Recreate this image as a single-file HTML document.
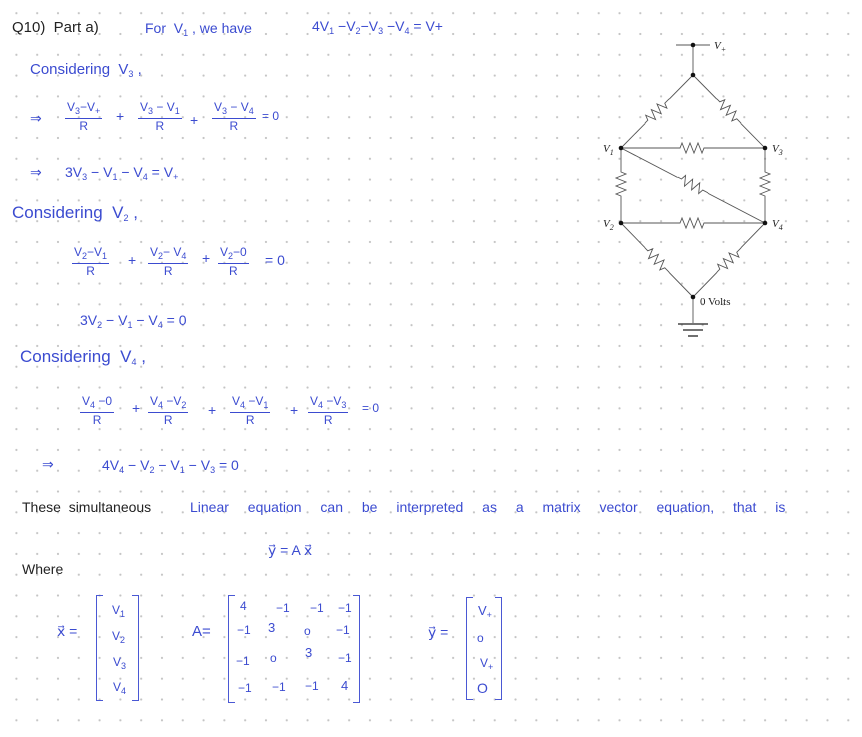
<!DOCTYPE html>
<html><head><meta charset="utf-8"><style>
html,body{margin:0;padding:0;}
body{width:862px;height:737px;position:relative;overflow:hidden;background-color:#fff;
background-image:radial-gradient(circle,#c4c4c4 0.9px,transparent 1.3px);
background-size:20.8px 20.8px;background-position:6px 2.8px;
font-family:"Liberation Sans",sans-serif;color:#3b4bd0;}
.t{position:absolute;white-space:nowrap;font-size:14px;line-height:16px;}
.k{color:#222;}
sub{font-size:9px;vertical-align:-3px;}
.f{position:absolute;text-align:center;font-size:12px;line-height:14px;}
.f .n{border-bottom:1.3px solid #3b4bd0;padding:0 2px;}
.br{position:absolute;border:1.6px solid #4a58d4;}
.bl{border-right:none;width:6px;}
.brr{border-left:none;width:6px;}
</style></head><body>
<div class="t k" style="left:12px;top:20px;font-size:15px">Q10)&nbsp; Part a)</div>
<div class="t" style="left:145px;top:20px">For&nbsp; V<sub>1</sub> , we have</div>
<div class="t" style="left:312px;top:18px">4V<sub>1</sub> −V<sub>2</sub>−V<sub>3</sub> −V<sub>4</sub> = V+</div>

<div class="t" style="left:30px;top:62px;font-size:15px">Considering&nbsp; V<sub>3</sub> ,</div>
<div class="t" style="left:30px;top:110px">⇒</div>
<div class="f" style="left:65px;top:100px"><div class="n">V<sub>3</sub>−V<sub>+</sub></div>R</div>
<div class="t" style="left:116px;top:108px">+</div>
<div class="f" style="left:138px;top:100px"><div class="n">V<sub>3</sub> − V<sub>1</sub></div>R</div>
<div class="t" style="left:190px;top:112px">+</div>
<div class="f" style="left:212px;top:100px"><div class="n">V<sub>3</sub> − V<sub>4</sub></div>R</div>
<div class="t" style="left:262px;top:108px;font-size:12px">= 0</div>

<div class="t" style="left:30px;top:164px">⇒</div>
<div class="t" style="left:65px;top:164px">3V<sub>3</sub> − V<sub>1</sub> − V<sub>4</sub> = V<sub>+</sub></div>

<div class="t" style="left:12px;top:205px;font-size:17px">Considering&nbsp; V<sub>2</sub> ,</div>
<div class="f" style="left:72px;top:245px"><div class="n">V<sub>2</sub>−V<sub>1</sub></div>R</div>
<div class="t" style="left:128px;top:252px">+</div>
<div class="f" style="left:148px;top:245px"><div class="n">V<sub>2</sub>− V<sub>4</sub></div>R</div>
<div class="t" style="left:202px;top:250px">+</div>
<div class="f" style="left:218px;top:245px"><div class="n">V<sub>2</sub>−0</div>R</div>
<div class="t" style="left:265px;top:252px">= 0</div>

<div class="t" style="left:80px;top:312px">3V<sub>2</sub> − V<sub>1</sub> − V<sub>4</sub> = 0</div>

<div class="t" style="left:20px;top:349px;font-size:17px">Considering&nbsp; V<sub>4</sub> ,</div>
<div class="f" style="left:80px;top:394px"><div class="n">V<sub>4</sub> −0</div>R</div>
<div class="t" style="left:132px;top:400px">+</div>
<div class="f" style="left:148px;top:394px"><div class="n">V<sub>4</sub> −V<sub>2</sub></div>R</div>
<div class="t" style="left:208px;top:402px">+</div>
<div class="f" style="left:230px;top:394px"><div class="n">V<sub>4</sub> −V<sub>1</sub></div>R</div>
<div class="t" style="left:290px;top:402px">+</div>
<div class="f" style="left:308px;top:394px"><div class="n">V<sub>4</sub> −V<sub>3</sub></div>R</div>
<div class="t" style="left:362px;top:400px;font-size:12px">= 0</div>

<div class="t" style="left:42px;top:456px">⇒</div>
<div class="t" style="left:102px;top:457px">4V<sub>4</sub> − V<sub>2</sub> − V<sub>1</sub> − V<sub>3</sub> = 0</div>

<div class="t k" style="left:22px;top:499px">These&nbsp; simultaneous</div>
<div class="t" style="left:190px;top:499px;word-spacing:15px">Linear equation can be interpreted as a matrix vector equation, that is</div>

<div class="t" style="left:268px;top:542px">y⃗ = A x⃗</div>
<div class="t k" style="left:22px;top:561px">Where</div>

<div class="t" style="left:57px;top:623px">x⃗ =</div>
<div class="br bl" style="left:96px;top:595px;height:104px"></div>
<div class="br brr" style="left:132px;top:595px;height:104px"></div>
<div class="t" style="left:112px;top:602px;font-size:12px">V<sub>1</sub></div>
<div class="t" style="left:112px;top:628px;font-size:12px">V<sub>2</sub></div>
<div class="t" style="left:113px;top:654px;font-size:12px">V<sub>3</sub></div>
<div class="t" style="left:113px;top:679px;font-size:12px">V<sub>4</sub></div>

<div class="t" style="left:192px;top:624px;font-size:15px">A=</div>
<div class="br bl" style="left:228px;top:595px;height:106px"></div>
<div class="br brr" style="left:353px;top:595px;height:106px"></div>
<div class="t" style="font-size:12px;left:240px;top:598px">4</div>
<div class="t" style="font-size:12px;left:276px;top:600px">−1</div>
<div class="t" style="font-size:12px;left:310px;top:600px">−1</div>
<div class="t" style="font-size:12px;left:338px;top:600px">−1</div>
<div class="t" style="font-size:12px;left:237px;top:622px">−1</div>
<div class="t" style="font-size:13px;left:268px;top:620px">3</div>
<div class="t" style="font-size:12px;left:304px;top:623px">o</div>
<div class="t" style="font-size:12px;left:336px;top:622px">−1</div>
<div class="t" style="font-size:12px;left:236px;top:653px">−1</div>
<div class="t" style="font-size:12px;left:270px;top:650px">o</div>
<div class="t" style="font-size:13px;left:305px;top:645px">3</div>
<div class="t" style="font-size:12px;left:338px;top:650px">−1</div>
<div class="t" style="font-size:12px;left:238px;top:680px">−1</div>
<div class="t" style="font-size:12px;left:272px;top:679px">−1</div>
<div class="t" style="font-size:12px;left:305px;top:678px">−1</div>
<div class="t" style="font-size:13px;left:341px;top:678px">4</div>

<div class="t" style="left:428px;top:624px">y⃗ =</div>
<div class="br bl" style="left:466px;top:597px;height:101px"></div>
<div class="br brr" style="left:495px;top:597px;height:101px"></div>
<div class="t" style="font-size:13px;left:478px;top:603px">V<sub>+</sub></div>
<div class="t" style="font-size:12px;left:477px;top:630px">o</div>
<div class="t" style="font-size:12px;left:480px;top:655px">V<sub>+</sub></div>
<div class="t" style="font-size:14px;left:477px;top:680px">O</div>

<svg style="position:absolute;left:0;top:0" width="862" height="737" viewBox="0 0 862 737">
<defs>
<g id="r"><line x1="-17" y1="0" x2="17" y2="0" stroke="#fff" stroke-width="5"/><path d="M-17 0 L-13 0 L-11 -5 L-7 5 L-3 -5 L1 5 L5 -5 L9 5 L11 0 L17 0" fill="none" stroke="#555" stroke-width="0.9"/></g>
</defs>
<g stroke="#555" stroke-width="0.9" fill="none">
<line x1="676" y1="45" x2="710" y2="45"/>
<line x1="693" y1="45" x2="693" y2="75"/>
<line x1="693" y1="75" x2="621" y2="148"/>
<line x1="693" y1="75" x2="765" y2="148"/>
<line x1="621" y1="148" x2="765" y2="148"/>
<line x1="621" y1="148" x2="621" y2="223"/>
<line x1="765" y1="148" x2="765" y2="223"/>
<line x1="621" y1="148" x2="765" y2="223"/>
<line x1="621" y1="223" x2="765" y2="223"/>
<line x1="621" y1="223" x2="693" y2="297"/>
<line x1="765" y1="223" x2="693" y2="297"/>
<line x1="693" y1="297" x2="693" y2="323"/>
</g>
<g stroke="#222" stroke-width="1.3">
<line x1="678" y1="324" x2="708" y2="324"/>
<line x1="683" y1="330" x2="703" y2="330"/>
<line x1="688" y1="336" x2="698" y2="336"/>
</g>
<use href="#r" transform="translate(657,111) rotate(-45)"/>
<use href="#r" transform="translate(729,111) rotate(45)"/>
<use href="#r" transform="translate(693,148)"/>
<use href="#r" transform="translate(621,185) rotate(90)"/>
<use href="#r" transform="translate(765,185) rotate(90)"/>
<use href="#r" transform="translate(693,185) rotate(27.5)"/>
<use href="#r" transform="translate(693,223)"/>
<use href="#r" transform="translate(657,260) rotate(45)"/>
<use href="#r" transform="translate(729,260) rotate(-45)"/>
<g fill="#111">
<circle cx="693" cy="45" r="2.3"/><circle cx="693" cy="75" r="2.3"/>
<circle cx="621" cy="148" r="2.3"/><circle cx="765" cy="148" r="2.3"/>
<circle cx="621" cy="223" r="2.3"/><circle cx="765" cy="223" r="2.3"/>
<circle cx="693" cy="297" r="2.3"/>
</g>
<g font-family="Liberation Serif,serif" font-size="11" fill="#222">
<text x="714" y="49" font-style="italic">V<tspan font-size="8" dy="3">+</tspan></text>
<text x="603" y="152" font-style="italic">V<tspan font-size="8" dy="3">1</tspan></text>
<text x="772" y="152" font-style="italic">V<tspan font-size="8" dy="3">3</tspan></text>
<text x="603" y="227" font-style="italic">V<tspan font-size="8" dy="3">2</tspan></text>
<text x="772" y="227" font-style="italic">V<tspan font-size="8" dy="3">4</tspan></text>
<text x="700" y="305">0 Volts</text>
</g>
</svg>
</body></html>
